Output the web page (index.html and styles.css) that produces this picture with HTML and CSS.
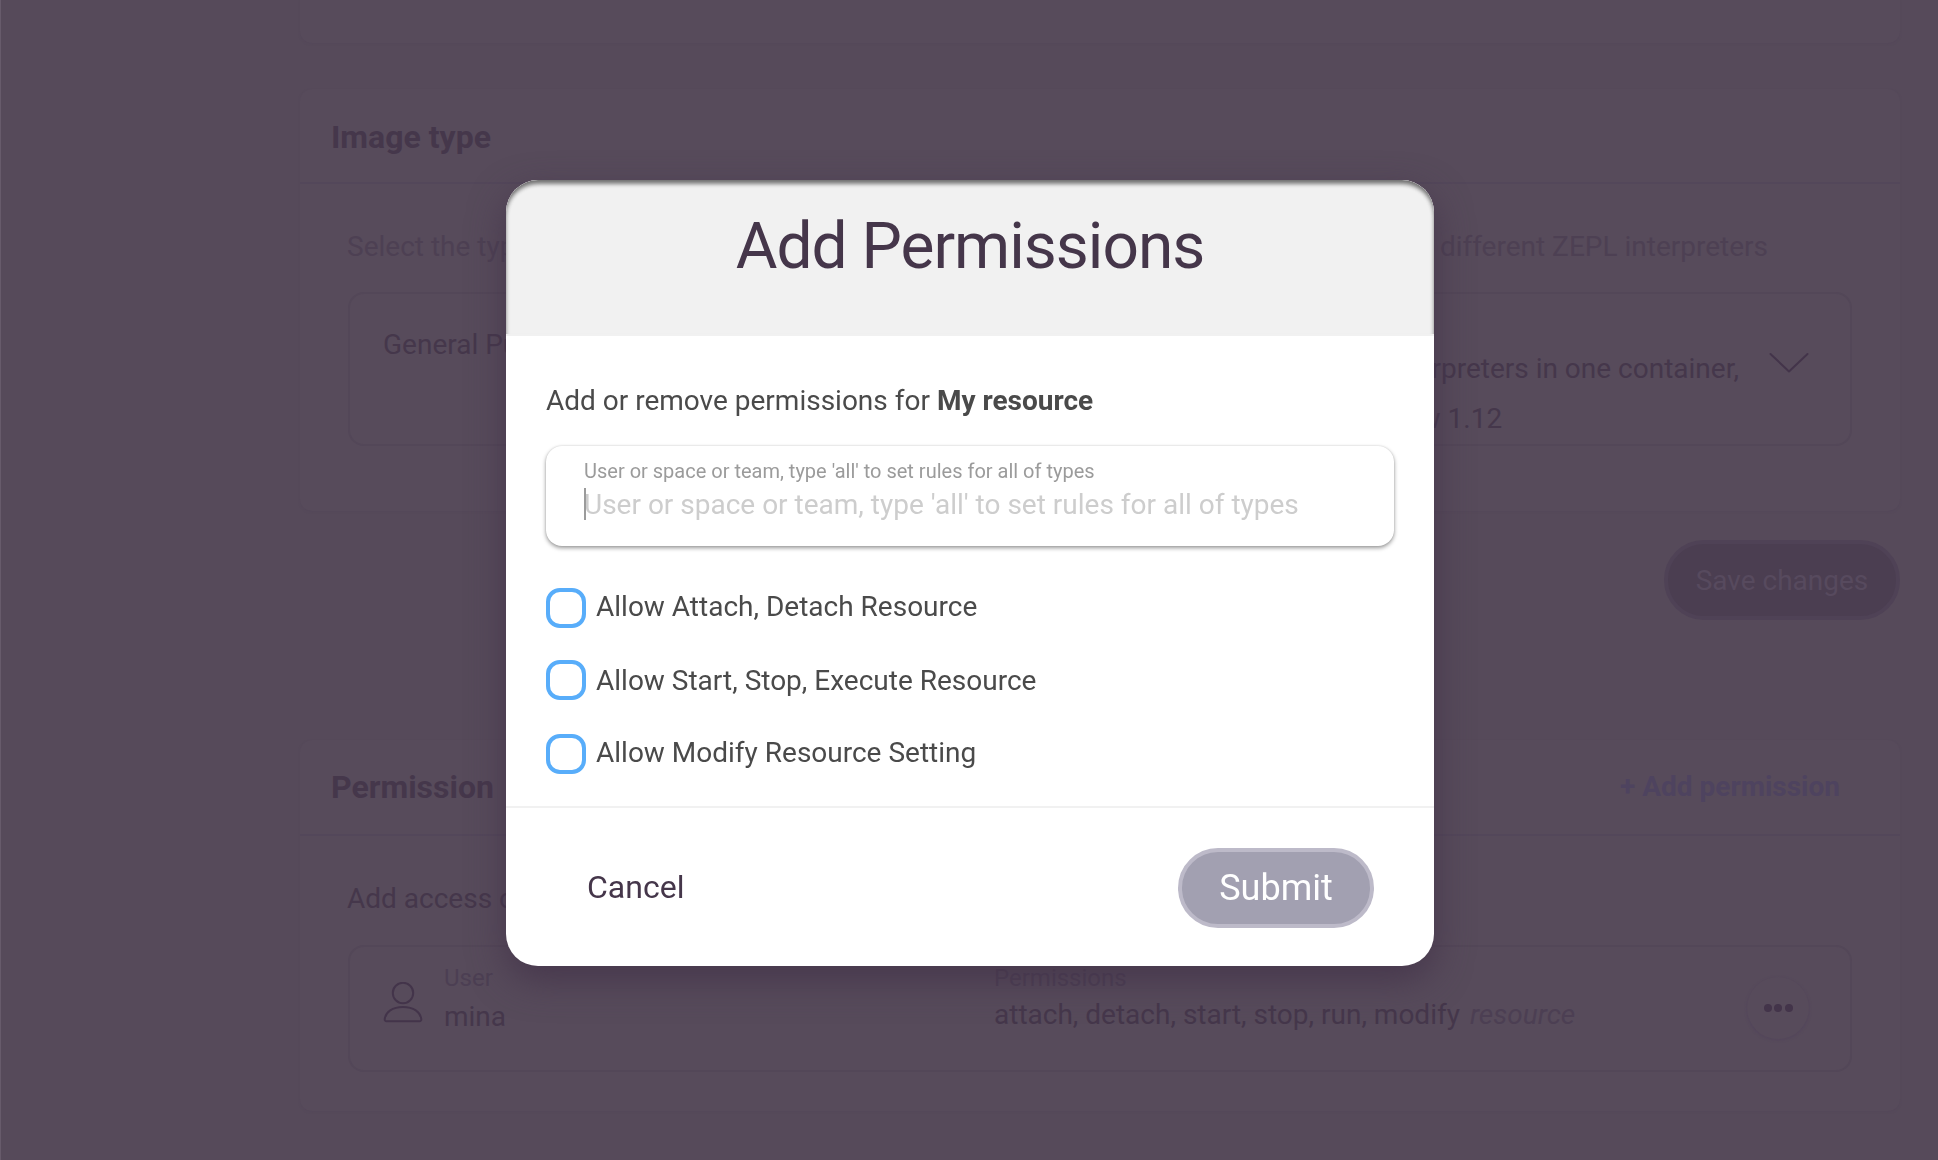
FILE: index.html
```
<!DOCTYPE html>
<html lang="en">
<head>
<meta charset="utf-8">
<title>Add Permissions</title>
<link rel="stylesheet" href="styles.css">
</head>
<body>
<main class="page">
  <section class="card card-top"></section>

  <section class="card card-image">
    <header class="card-header"><h2>Image type</h2></header>
    <div class="card-body">
      <p class="hint"><span>Select the type</span><span class="hint-end">different ZEPL interpreters</span></p>
      <div class="box select-box">
        <span class="select-name">General Purpose</span>
        <p class="select-desc">interpreters in one container,<span class="select-version">Tensorflow 1.12</span></p>
        <svg class="chevron" width="40" height="22" viewBox="0 0 40 22" fill="none" stroke="#43344a" stroke-width="2" stroke-linecap="round" stroke-linejoin="round"><path d="M1.500 2 20 19.500 38.500 2"/></svg>
      </div>
    </div>
  </section>

  <div class="actions"><button class="save">Save changes</button></div>

  <section class="card card-permission">
    <header class="card-header"><h2>Permission</h2><a class="add-link">+ Add permission</a></header>
    <div class="card-body">
      <p class="intro">Add access control</p>
      <div class="box user-box">
        <svg class="user-icon" width="40" height="44" viewBox="0 0 40 44" fill="none" stroke="#43344a" stroke-width="2"><circle cx="20" cy="11" r="10.2"/><path d="M3.500 39.200h33a1.800 1.800 0 0 0 1.800-2C37.500 30 30.500 25 20 25S2.500 30 1.700 37.200a1.800 1.800 0 0 0 1.800 2z"/></svg>
        <div class="field-col user-col"><span class="caption">User</span><span class="value">mina</span></div>
        <div class="field-col perm-col"><span class="caption">Permissions</span><span class="value">attach, detach, start, stop, run, modify <em>resource</em></span></div>
        <span class="more"><i></i><i></i><i></i></span>
      </div>
    </div>
  </section>
</main>

<div class="overlay">
  <div class="modal">
    <header class="modal-header"><h1>Add Permissions</h1></header>
    <div class="modal-body">
      <p class="lead">Add or remove permissions for <b>My resource</b></p>
      <div class="input">
        <span class="input-label">User or space or team, type 'all' to set rules for all of types</span>
        <span class="input-line"><span class="caret"></span>User or space or team, type 'all' to set rules for all of types</span>
      </div>
      <div class="checks">
        <label class="check"><span class="tick"></span><span>Allow Attach, Detach Resource</span></label>
        <label class="check"><span class="tick"></span><span>Allow Start, Stop, Execute Resource</span></label>
        <label class="check"><span class="tick"></span><span>Allow Modify Resource Setting</span></label>
      </div>
    </div>
    <footer class="modal-footer"><button class="cancel">Cancel</button><button class="submit">Submit</button></footer>
  </div>
</div>
</body>
</html>
```
FILE: styles.css
```
* { box-sizing: border-box; }

body {
  margin: 0;
  height: 1160px;
  overflow: hidden;
  background: #564a5a;
  border-left: 1px solid #675b6b;
  font: 28px/40px Roboto, sans-serif;
  color: #45374b;
}

h1, h2, p { margin: 0; }
button { font-family: inherit; padding: 0; }

/* Settings page */
.page {
  display: flex;
  flex-direction: column;
  width: 1899px;
  padding-left: 299px;
  height: 1160px;
}

.card {
  flex: none;
  width: 1600px;
  border-radius: 12px;
  background: #574b5b;
  box-shadow: 0 1px 2px #54485a;
}
.card-top { height: 43px; border-radius: 0 0 12px 12px; }
.card-image { height: 422px; margin-top: 46px; }
.card-permission { height: 371px; margin-top: 120px; }

.card-header {
  display: flex;
  align-items: center;
  justify-content: space-between;
  height: 95px;
  padding: 3px 60px 0 31px;
  border-bottom: 2px solid #53475a;
}
.card-permission .card-header { height: 96px; padding-top: 0; }
.card-header h2 { font-size: 32px; font-weight: 700; }
.add-link { font-weight: 700; color: #4e435f; }

.card-body { padding: 0 48px; }
.hint {
  display: flex;
  justify-content: space-between;
  padding: 43px 84px 0 0;
  color: #4d4053;
}
.intro, .hint { margin-left: -1px; }

.box {
  display: flex;
  width: 1504px;
  border: 2px solid #534758;
  border-radius: 16px;
}
.select-box {
  height: 154px;
  margin-top: 25px;
  padding: 31px 41px 0 33px;
}
.select-desc { margin: 19px 30px 0 auto; line-height: 50px; }
.select-version { display: block; width: 117px; white-space: nowrap; direction: rtl; }
.chevron { margin-top: 27px; }

.actions { display: flex; justify-content: flex-end; margin-top: 29px; }
.save {
  flex: none;
  width: 236px;
  height: 80px;
  border: 4px solid #4f4256;
  border-radius: 40px;
  background: #4b3e51;
  color: #574a5e;
  font-size: 28px;
}

.intro { padding-top: 43px; }
.user-box { height: 127px; margin-top: 26px; padding: 0 40px 0 33px; }
.user-icon { flex: none; margin-top: 35px; }
.field-col { display: flex; flex-direction: column; padding-top: 11px; }
.user-col { flex: none; width: 571px; padding-left: 21px; }
.perm-col { flex: 1; }
.caption { font-size: 24px; line-height: 40px; color: #4c3f53; }
.value { line-height: 34px; }
.user-col .value { padding-top: 2px; }
.value em { margin-left: 3px; color: #4c3f53; }
.more {
  display: flex;
  flex: none;
  align-items: center;
  justify-content: center;
  gap: 2.500px;
  width: 62px;
  height: 62px;
  margin: 30px 1px 0;
  border-radius: 50%;
  background: #574b5b;
  box-shadow: 0 1px 2px 1px #54475b;
}
.more i { width: 8px; height: 8px; border-radius: 50%; background: #43344a; }

/* Dialog */
.overlay {
  position: fixed;
  inset: 0;
  display: flex;
  justify-content: center;
  align-items: flex-start;
  padding: 180px 0 0 2px;
}
.modal {
  width: 928px;
  height: 786px;
  overflow: hidden;
  border-radius: 32px;
  background: #fff;
  box-shadow: 0 14px 36px rgba(66, 50, 72, 0.8);
}
.modal-header {
  height: 156px;
  padding-top: 27px;
  border-bottom: 2px solid #f1f1f1;
  border-radius: 32px 32px 0 0;
  background: #f1f1f1;
  box-shadow: inset 0 4px 4px -1px rgba(0, 0, 0, 0.35), inset 0 4px 4px rgba(0, 0, 0, 0.3);
  text-align: center;
}
.modal-header h1 {
  font-size: 64px;
  line-height: 80px;
  font-weight: 400;
  letter-spacing: -1px;
  color: #45364a;
}

.modal-body {
  height: 472px;
  padding: 45px 40px 0;
  border-bottom: 2px solid #f1f1f1;
  color: #4a4a4a;
}
.input {
  display: flex;
  flex-direction: column;
  height: 100px;
  margin-top: 25px;
  padding: 12px 38px 0;
  border-radius: 16px;
  box-shadow: 0 2px 4px rgba(0, 0, 0, 0.4), 0 0 2px rgba(0, 0, 0, 0.12);
}
.input-label { font-size: 20px; line-height: 26px; color: #9b9b9b; }
.input-line { position: relative; line-height: 42px; color: #cdcdcd; }
.caret { position: absolute; left: 0; top: 4px; width: 2px; height: 32px; background: #9b9b9b; }

.checks { display: flex; flex-direction: column; margin-top: 42px; }
.check { display: flex; align-items: flex-start; height: 72px; gap: 10px; line-height: 37px; }
.check + .check { height: 74px; line-height: 42px; }
.check + .check + .check { line-height: 38px; }
.tick { flex: none; width: 40px; height: 40px; border: 4px solid #58adfa; border-radius: 14px; }

.modal-footer {
  display: flex;
  align-items: center;
  justify-content: space-between;
  padding: 40px 60px 0 81px;
}
.cancel { border: 0; margin-bottom: 2px; background: none; font-size: 32px; color: #45364a; }
.submit {
  width: 196px;
  height: 80px;
  border: 4px solid #bdbac9;
  border-radius: 40px;
  background: #a2a0b1;
  color: #fff;
  font-size: 36px;
}
```
